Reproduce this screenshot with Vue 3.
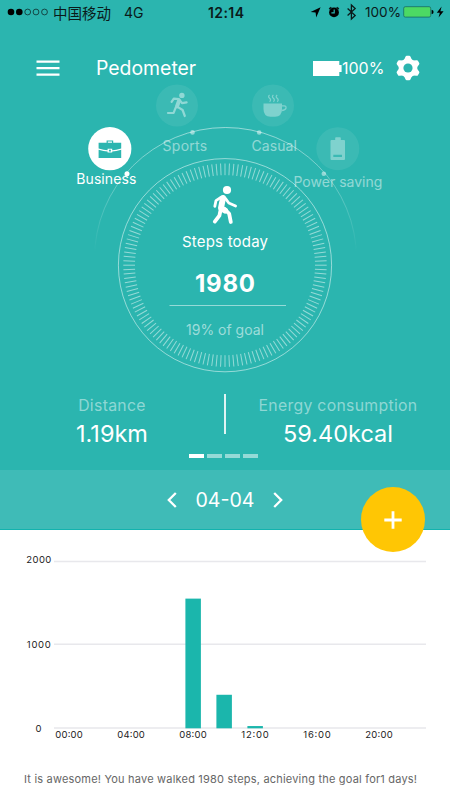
<script setup>
  import { ref, computed } from 'vue';

  const steps = ref(1980)
  const goal = ref(19)
  const page = ref(0)
  const day = ref(4)

  const dayLabel = computed(() => '04-' + String(day.value).padStart(2, '0'))
  const prevDay = () => day.value = Math.max(day.value - 1, 1)
  const nextDay = () => day.value = Math.min(day.value + 1, 30)

  // ticks inside of the dial
  const ticks = Array.from({ length: 144 }, (_, i) => i * 2.5)

  const hours = ['00:00', '04:00', '08:00', '12:00', '16:00', '20:00']
  const bars = [
    { slot: 4, value: 1555 },
    { slot: 5, value: 402 },
    { slot: 6, value: 27 },
  ]
  const barHeight = (value) => value * 0.0834
</script>

<template>
  <main>
    <section class="top">
      <div class="status">
        <svg class="signal" width="42" height="8" viewBox="0 0 42 8">
          <circle cx="4" cy="4" r="3.3" />
          <circle cx="12.3" cy="4" r="3.3" />
          <g class="empty">
            <circle cx="20.7" cy="4" r="2.9" />
            <circle cx="29" cy="4" r="2.9" />
            <circle cx="37.5" cy="4" r="2.9" />
          </g>
        </svg>
        <span class="carrier">中国移动</span>
        <span class="network">4G</span>
        <span class="clock">12:14</span>
        <svg class="status-icons" width="52" height="18" viewBox="0 0 52 18">
          <path d="M0.6 9 L10.6 4.2 L6.2 14.4 L5.6 9.4 Z" />
          <circle cx="24" cy="9.4" r="4.9" />
          <path class="ear" d="M19.2 6 L21.4 4.4 M28.8 6 L26.6 4.4" />
          <path class="hand" d="M24.2 6.4 V9.8 H21.4" />
          <path class="bt" d="M37.6 5.4 L45.2 12.4 L41.4 16 V2 L45.2 5.6 L37.6 12.6" />
        </svg>
        <span class="charge">100%</span>
        <svg class="charge-icon" width="41" height="14" viewBox="0 0 41 14">
          <rect class="cell" x="0.7" y="1.7" width="27" height="10.4" rx="1.6" />
          <path d="M28.6 4.8 Q30.6 5.2 30.6 7 T28.6 9.2 Z" />
          <path d="M38.6 1.6 L33.8 7.8 H36.8 L35.6 12.6 L40.6 6.2 H37.4 Z" />
        </svg>
      </div>

      <header>
        <svg class="menu" width="24" height="16" viewBox="0 0 24 16">
          <path d="M0.5 1.7 H23.5 M0.5 8.2 H23.5 M0.5 14.7 H23.5" />
        </svg>
        <h1>Pedometer</h1>
        <svg class="band" width="29" height="15" viewBox="0 0 29 15">
          <path d="M0 0 H26.3 V4 H28.6 V11 H26.3 V15 H0 Z" />
        </svg>
        <span class="band-level">100%</span>
        <svg class="gear" width="26" height="26" viewBox="-13 -13 26 26">
          <circle r="9.4" />
          <path
            v-for="angle in [0, 60, 120, 180, 240, 300]"
            :key="angle"
            d="M-4 -8 L-2.4 -11.4 Q-2.1 -12.2 -1.3 -12.2 H1.3 Q2.1 -12.2 2.4 -11.4 L4 -8 Z"
            :transform="`rotate(${angle})`" />
          <circle class="hole" r="4.6" />
        </svg>
      </header>

      <svg class="dial" width="450" height="300" viewBox="0 82 450 300">
        <defs>
          <linearGradient id="fade" x1="0" y1="127" x2="0" y2="252" gradientUnits="userSpaceOnUse">
            <stop offset="0" stop-color="#fff" stop-opacity=".5" />
            <stop offset=".4" stop-color="#fff" stop-opacity=".32" />
            <stop offset="1" stop-color="#fff" stop-opacity="0" />
          </linearGradient>
        </defs>

        <circle class="orbit" cx="225.5" cy="258.5" r="131" stroke="url(#fade)" />
        <circle class="ring" cx="225" cy="265.2" r="106.6" />
        <path
          v-for="angle in ticks"
          :key="angle"
          class="tick"
          d="M225 163.5 V175.2"
          :transform="`rotate(${angle} 225 265.2)`" />

        <g class="mode active">
          <circle class="disc" cx="109.8" cy="148.7" r="21.6" />
          <circle class="dot" cx="127" cy="173.7" r="2.5" />
          <g class="glyph">
            <path class="handle" d="M107.2 143.4 V141 H112.6 V143.4" />
            <path d="M98.6 142.8 H121.2 V148.6 Q116 150.1 112.2 150.2 V148.8 H107.6 V150.2 Q104 150.1 98.6 148.6 Z" />
            <path d="M98.6 149.8 Q104 151.3 107.6 151.4 V152.4 H112.2 V151.4 Q116 151.3 121.2 149.8 V158 H98.6 Z" />
            <rect x="108.9" y="149.7" width="2" height="1.8" />
          </g>
          <text x="76.3" y="184" textLength="60">Business</text>
        </g>

        <g class="mode">
          <circle class="disc" cx="177" cy="105.5" r="21" />
          <circle class="dot" cx="192.5" cy="132.4" r="2.3" />
          <g class="runner">
            <circle class="solid" cx="181.9" cy="95.4" r="2.7" />
            <path class="limb" d="M171.6 101.8 L173.8 98.6 L179 99.2 L182 103.2 L186.6 102.4" />
            <path class="torso" d="M179 100.8 L177 106.4" />
            <path class="limb" d="M177.2 106.6 L182.6 110 L184.8 116 M175.8 107.4 L173.6 112.8 L168 113" />
          </g>
          <text x="162.6" y="150.6" textLength="44.5">Sports</text>
        </g>

        <g class="mode">
          <circle class="disc" cx="273" cy="105.5" r="21" />
          <circle class="dot" cx="259.2" cy="132.5" r="2.3" />
          <g class="faint">
            <path class="solid" d="M263.5 103.5 H282 V109 Q282 116.7 275 116.7 H270.5 Q263.5 116.7 263.5 109 Z" />
            <path class="cup" d="M282 105.8 H284.3 Q286.3 106 286 108 Q285.5 110.2 281.5 110.5" />
            <path class="steam" d="M269.6 95 q-2 1.6 0 3.3 t0 3.4 M273.4 95 q-2 1.6 0 3.3 t0 3.4 M277.2 95 q-2 1.6 0 3.3 t0 3.4" />
          </g>
          <text x="251.4" y="150.6" textLength="45.5">Casual</text>
        </g>

        <g class="mode">
          <circle class="disc" cx="337.8" cy="148.7" r="21.5" />
          <circle class="dot" cx="323.8" cy="173.8" r="2.3" />
          <path class="solid faint" fill-rule="evenodd" d="M336 137.3 H340 Q340.8 137.3 340.8 138 V140 H344 Q345 140 345 141 V159 Q345 160 344 160 H331.5 Q330.5 160 330.5 159 V141 Q330.5 140 331.5 140 H335.2 V138 Q335.2 137.3 336 137.3 Z M333.3 154.7 V157 H342 V154.7 Z" />
          <text x="293.4" y="186.6" textLength="89">Power saving</text>
        </g>

        <g class="walker">
          <circle cx="227" cy="190" r="4.1" />
          <path class="body" d="M223 198 L221 208 L225 210.5" />
          <path class="arm" d="M220.8 197.4 L216 200.6 L214.8 206.4 M225.4 198.4 L228.8 203 L235.6 206" />
          <path class="leg" d="M224.6 209 L229.2 213.8 L230.8 222 M220.8 209 L219.4 215.6 L214.8 221.6" />
        </g>
        <text class="caption" x="182" y="246.5" textLength="86">Steps today</text>
        <text class="steps" x="195" y="291.6" textLength="60">{{ steps }}</text>
        <path class="rule" d="M169.5 305.5 H286" />
        <text class="goal" x="186" y="335.3" textLength="78">{{ goal }}% of goal</text>
      </svg>

      <div class="stats">
        <div class="stat">
          <span>Distance</span>
          <b>1.19km</b>
        </div>
        <i class="divider"></i>
        <div class="stat energy">
          <span>Energy consumption</span>
          <b>59.40kcal</b>
        </div>
      </div>

      <div class="pager">
        <i v-for="n in 4" :key="n" :class="{ on: n - 1 === page }" @click="page = n - 1"></i>
      </div>
    </section>

    <section class="date">
      <svg class="arrow" width="10" height="16" viewBox="0 0 10 16" @click="prevDay">
        <path d="M8.8 1 L1.8 8 L8.8 15" />
      </svg>
      <span>{{ dayLabel }}</span>
      <svg class="arrow" width="10" height="16" viewBox="0 0 10 16" @click="nextDay">
        <path d="M1.2 1 L8.2 8 L1.2 15" />
      </svg>
      <button class="add">
        <svg width="18" height="18" viewBox="0 0 18 18">
          <path d="M9 0.3 V17.7 M0.3 9 H17.7" />
        </svg>
      </button>
    </section>

    <svg class="chart" width="450" height="230" viewBox="0 530 450 230">
      <path class="grid" d="M54 561.5 H426 M54 644.2 H426 M54 728 H426" />
      <text x="26.3" y="563.3" textLength="25">2000</text>
      <text x="26.8" y="648" textLength="24">1000</text>
      <text x="35.6" y="732.3">0</text>
      <rect
        v-for="bar in bars"
        :key="bar.slot"
        :x="61.4 + bar.slot * 31"
        :y="728.3 - barHeight(bar.value)"
        width="15.5"
        :height="barHeight(bar.value)" />
      <text v-for="(hour, i) in hours" :key="hour" :x="55.3 + i * 62" y="738" textLength="27.5">{{ hour }}</text>
    </svg>

    <p>It is awesome! You have walked {{ steps }} steps, achieving the goal for1 days!</p>
  </main>
</template>

<style>
body {
  margin: 0;
}
</style>

<style scoped>
main {
  width: 450px;
  height: 800px;
  overflow: hidden;
  background: #fff;
  font-family: Inter, "Noto Sans CJK SC", sans-serif;
}

.top {
  height: 470px;
  background: #2bb5af;
  color: #fff;
}

svg {
  display: block;
  flex: none;
}

.status {
  display: flex;
  align-items: center;
  height: 24px;
  padding-left: 7px;
  color: #0a1a1a;
  white-space: nowrap;
}
.signal .empty {
  fill: none;
  stroke: #0a1a1a;
  stroke-width: .7;
}
.carrier {
  width: 71px;
  margin-left: 4px;
  font-family: "Noto Sans CJK SC", sans-serif;
  font-size: 14.5px;
}
.network {
  width: 84px;
  font-size: 14px;
}
.clock {
  width: 102px;
  font-size: 14px;
  font-weight: 600;
  letter-spacing: .4px;
}
.status-icons .ear {
  stroke: #0a1a1a;
  stroke-width: 1.6;
}
.status-icons .hand {
  fill: none;
  stroke: #2bb5af;
  stroke-width: 1.2;
}
.status-icons .bt {
  fill: none;
  stroke: #0a1a1a;
  stroke-width: 1.3;
}
.charge {
  width: 38px;
  margin-left: 3px;
  font-size: 13.6px;
}
.charge-icon .cell {
  fill: #4cd964;
  stroke: #176b64;
  stroke-width: .8;
}

header {
  display: flex;
  align-items: center;
  height: 30px;
  padding: 29px 0 0 36px;
  margin-bottom: -1px;
}
.menu {
  fill: none;
  stroke: #fff;
  stroke-width: 2.2;
}
h1 {
  width: 217px;
  margin: 0 0 0 36px;
  font-size: 19.4px;
  font-weight: 400;
}
.band, .gear {
  fill: #fff;
}
.gear .hole {
  fill: #2bb5af;
}
.band-level {
  width: 53px;
  font-size: 16px;
}

.dial {
  fill: none;
}
.orbit, .ring, .tick, .rule {
  stroke-width: 1;
}
.ring, .tick, .rule {
  stroke: rgba(255, 255, 255, .5);
}
.dial text {
  fill: #fff;
  font-size: 14px;
}
.mode {
  opacity: .48;
}
.mode .disc {
  fill: rgba(255, 255, 255, .16);
}
.mode .dot, .solid {
  fill: #fff;
}
.faint {
  opacity: .8;
}
.runner path {
  stroke: #fff;
  stroke-linecap: round;
  stroke-linejoin: round;
}
.runner .limb {
  stroke-width: 2.2;
}
.runner .torso {
  stroke-width: 4;
}
.mode .cup {
  stroke: #fff;
  stroke-width: 1.3;
}
.mode .steam {
  stroke: #fff;
  stroke-width: 1.2;
}
.mode.active {
  opacity: 1;
}
.mode.active .disc {
  fill: #fff;
}
.glyph {
  fill: #2bb5af;
}
.glyph .handle {
  fill: none;
  stroke: #2bb5af;
  stroke-width: 1.2;
}
.walker circle {
  fill: #fff;
}
.walker path {
  stroke: #fff;
  stroke-linecap: round;
  stroke-linejoin: round;
}
.walker .body {
  stroke-width: 6;
}
.walker .arm {
  stroke-width: 2.8;
}
.walker .leg {
  stroke-width: 3.8;
}
.dial .caption {
  font-size: 15px;
}
.dial .steps {
  font-size: 24px;
  font-weight: 700;
}
.dial .goal {
  font-size: 14px;
  fill: rgba(255, 255, 255, .55);
}

.stats {
  display: flex;
  align-items: flex-start;
  height: 60px;
  padding-top: 12px;
}
.stat {
  display: flex;
  flex-direction: column;
  align-items: center;
  width: 224px;
}
.stat span {
  font-size: 15.8px;
  line-height: 23px;
  color: rgba(255, 255, 255, .48);
  letter-spacing: .3px;
}
.stat b {
  font-size: 23.5px;
  font-weight: 400;
  line-height: 33px;
}
.divider {
  width: 2px;
  height: 40px;
  background: rgba(255, 255, 255, .85);
}

.pager {
  display: flex;
  gap: 3px;
  padding-left: 189px;
}
.pager i {
  width: 15px;
  height: 4px;
  background: rgba(255, 255, 255, .5);
}
.pager .on {
  background: #fff;
}

.date {
  position: relative;
  display: flex;
  align-items: center;
  justify-content: center;
  gap: 18.5px;
  height: 59px;
  border-bottom: 1px solid #12b3ae;
  background: #3fbbb7;
  color: #fff;
  font-size: 19.6px;
}
.arrow {
  fill: none;
  stroke: #fff;
  stroke-width: 2.3;
}
.add {
  position: absolute;
  top: 17px;
  left: 361px;
  display: flex;
  align-items: center;
  justify-content: center;
  width: 64px;
  height: 65px;
  padding: 0;
  border: 0;
  border-radius: 50%;
  background: #ffc604;
}
.add svg {
  fill: none;
  stroke: #fff;
  stroke-width: 2.8;
}

.chart .grid {
  stroke: #e8e8ec;
  stroke-width: 1.5;
}
.chart rect {
  fill: #1bb6ac;
}
.chart text {
  fill: #222;
  font-size: 9.5px;
}

p {
  margin: 10px 0 0 24px;
  font-size: 11px;
  line-height: 18px;
  letter-spacing: .2px;
  color: #666;
  white-space: nowrap;
}
</style>
